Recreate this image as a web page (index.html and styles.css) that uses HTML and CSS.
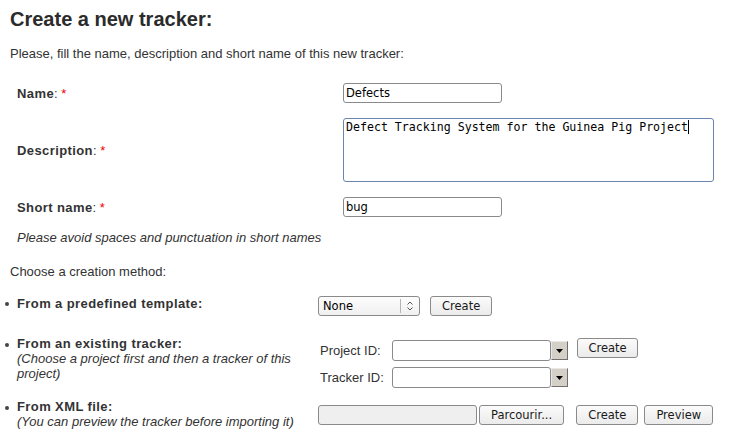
FILE: index.html
```html
<!DOCTYPE html>
<html>
<head>
<meta charset="utf-8">
<title>Create a new tracker</title>
<link rel="stylesheet" href="styles.css">
</head>
<body>
<div class="page">
  <h1 class="title">Create a new tracker:</h1>
  <p class="intro">Please, fill the name, description and short name of this new tracker:</p>

  <div class="fields">
    <div class="label"><b>Name</b>: <span class="req">*</span></div>
    <div class="control"><input class="text" type="text" value="Defects"></div>

    <div class="label"><b>Description</b>: <span class="req">*</span></div>
    <div class="control"><div class="textarea">Defect Tracking System for the Guinea Pig Project<span class="caret"></span></div></div>

    <div class="label"><b>Short name</b>: <span class="req">*</span></div>
    <div class="control"><input class="text" type="text" value="bug"></div>
  </div>

  <p class="hint">Please avoid spaces and punctuation in short names</p>
  <p class="choose">Choose a creation method:</p>

  <ul class="methods">
    <li class="method m-template">
      <div class="method-grid">
        <div class="mlabel"><b>From a predefined template:</b></div>
        <div class="mcontrols row">
          <div class="select">
            <span class="select-value">None</span>
            <span class="select-arrows">
              <svg width="8" height="10" viewBox="0 0 8 10"><path d="M1.5 3.5 L4 1 L6.5 3.5 M1.5 6.5 L4 9 L6.5 6.5" fill="none" stroke="#555" stroke-width="1"/></svg>
            </span>
          </div>
          <button class="btn btn-gap10">Create</button>
        </div>
      </div>
    </li>
    <li class="method m-existing">
      <div class="method-grid">
        <div class="mlabel"><b>From an existing tracker:</b><br><i>(Choose a project first and then a tracker of this project)</i></div>
        <div class="mcontrols ids">
          <span class="id-label">Project ID:</span>
          <div class="combo"><input class="combo-input" type="text"><span class="combo-btn"><svg width="7" height="4" viewBox="0 0 7 4"><path d="M0 0 H7 L3.5 4 Z" fill="#000"/></svg></span></div>
          <button class="btn btn-id">Create</button>
          <span class="id-label">Tracker ID:</span>
          <div class="combo"><input class="combo-input" type="text"><span class="combo-btn"><svg width="7" height="4" viewBox="0 0 7 4"><path d="M0 0 H7 L3.5 4 Z" fill="#000"/></svg></span></div>
        </div>
      </div>
    </li>
    <li class="method m-xml">
      <div class="method-grid">
        <div class="mlabel"><b>From XML file:</b><br><i>(You can preview the tracker before importing it)</i></div>
        <div class="mcontrols row">
          <span class="file-field"></span>
          <button class="btn btn-browse">Parcourir...</button>
          <button class="btn btn-create-xml">Create</button>
          <button class="btn btn-preview">Preview</button>
        </div>
      </div>
    </li>
  </ul>
</div>
</body>
</html>
```

FILE: styles.css
```css
html, body {
  margin: 0;
  padding: 0;
  background: #fff;
}
body {
  font-family: "Liberation Sans", Arial, sans-serif;
  font-size: 13px;
  line-height: 15px;
  color: #333;
}
.page {
  padding: 0 10px;
}
.title {
  margin: 7px 0 0;
  font-size: 20px;
  line-height: 24px;
  font-weight: bold;
  color: #2b2b2b;
}
.intro {
  margin: 15px 0 0;
}
.fields {
  display: grid;
  grid-template-columns: 333px 1fr;
  row-gap: 15px;
  align-items: center;
  margin-top: 22px;
}
.label {
  padding-left: 7px;
}
.label b {
  letter-spacing: 0.4px;
}
.req {
  color: #e00;
}
.control {
  display: flex;
}
.text {
  box-sizing: border-box;
  width: 159px;
  height: 20px;
  margin: 0;
  padding: 0 2px;
  border: 1px solid #8a8a8a;
  border-radius: 3px;
  font-family: "DejaVu Sans", sans-serif;
  font-size: 11.5px;
  color: #000;
  background: #fff;
  outline: none;
}
.textarea {
  box-sizing: border-box;
  width: 371px;
  height: 64px;
  padding: 1px 2px;
  border: 1px solid #6b85b0;
  border-radius: 3px;
  font-family: "DejaVu Sans Mono", monospace;
  font-size: 11.6px;
  line-height: 15px;
  color: #000;
}
.caret {
  display: inline-block;
  width: 1px;
  height: 14px;
  background: #000;
  vertical-align: -3px;
}
.hint {
  margin: 13px 0 0;
  padding-left: 7px;
  font-style: italic;
}
.choose {
  margin: 19px 0 0;
}
.methods {
  margin: 17px 0 0;
  padding: 0 0 0 7px;
  list-style: none;
}
.method {
  position: relative;
}
.method::before {
  content: "";
  position: absolute;
  left: -12px;
  top: 6px;
  width: 4px;
  height: 4px;
  border-radius: 50%;
  background: #444;
}
.m-template::before {
  top: 6px;
}
.m-existing::before {
  top: 5px;
}
.m-xml::before {
  top: 4px;
}
.method-grid {
  display: grid;
  grid-template-columns: 301px auto;
  align-items: start;
}
.m-existing {
  margin-top: 22px;
}
.m-xml {
  margin-top: 14px;
}
.mlabel b {
  letter-spacing: 0.4px;
}
.m-template .mlabel {
  margin-top: 0;
}
.m-existing .mlabel {
  margin-top: -2px;
}
.m-xml .mlabel {
  margin-top: -3px;
}
.m-xml .mcontrols {
  margin-top: 3px;
}
.row {
  display: flex;
  align-items: center;
}
.btn {
  box-sizing: border-box;
  height: 20px;
  margin: 0;
  padding: 0 11px;
  border: 1px solid #8a8a8a;
  border-radius: 3px;
  background: linear-gradient(#fbfbfb, #ebebeb);
  font-family: "DejaVu Sans", sans-serif;
  font-size: 11.5px;
  line-height: 18px;
  color: #1a1a1a;
}
.btn-gap10 {
  margin-left: 10px;
}
.select {
  box-sizing: border-box;
  width: 102px;
  height: 20px;
  display: flex;
  align-items: center;
  border: 1px solid #8a8a8a;
  border-radius: 3px;
  background: linear-gradient(#fdfdfd, #f0f0f0);
  font-family: "DejaVu Sans", sans-serif;
  font-size: 11.5px;
  color: #000;
}
.select-value {
  flex: 1;
  padding-left: 4px;
}
.select-arrows {
  display: flex;
  align-items: center;
  justify-content: center;
  width: 18px;
  height: 14px;
  border-left: 1px solid #b5b5b5;
}
.ids {
  display: grid;
  grid-template-columns: 74px 176px auto;
  grid-auto-rows: 21px;
  row-gap: 6px;
  align-items: center;
  margin-top: 2px;
}
.id-label {
  padding-left: 2px;
  color: #333;
}
.combo {
  display: flex;
  align-items: center;
  height: 21px;
}
.combo-input {
  box-sizing: border-box;
  width: 159px;
  height: 21px;
  margin: 0;
  padding: 0 2px;
  border: 1px solid #8a8a8a;
  border-radius: 3px;
  background: #fff;
  outline: none;
}
.combo-btn {
  box-sizing: border-box;
  width: 17px;
  height: 19px;
  display: flex;
  align-items: center;
  justify-content: center;
  border: 1px solid #6f6f6f;
  border-top-color: #e8e8e8;
  border-left-color: #e8e8e8;
  background: #d4d0c8;
}
.btn-id {
  align-self: start;
  margin-top: -2px;
  margin-left: 9px;
  width: 61px;
  padding: 0;
}
.file-field {
  box-sizing: border-box;
  width: 159px;
  height: 20px;
  border: 1px solid #8a8a8a;
  border-radius: 3px;
  background: #efefef;
}
.btn-browse {
  margin-left: 2px;
}
.btn-create-xml {
  margin-left: 12px;
}
.btn-preview {
  margin-left: 6px;
}
```
